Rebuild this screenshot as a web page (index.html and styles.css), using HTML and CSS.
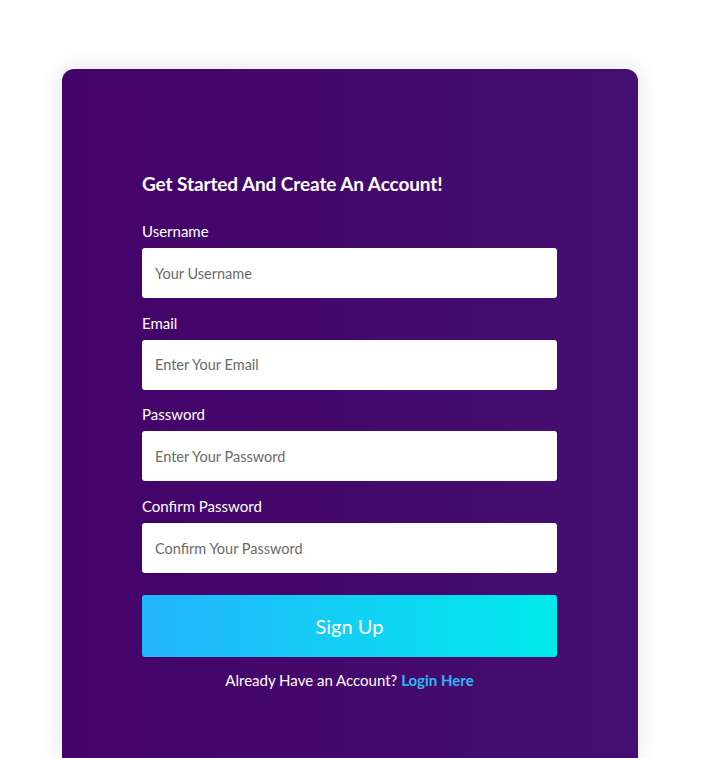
FILE: index.html
```html
<!DOCTYPE html>
<html lang="en">
<head>
<meta charset="utf-8">
<title>Sign Up</title>
<link rel="stylesheet" href="styles.css">
</head>
<body>
<div class="page">
  <div class="card">
    <form class="form">
      <h2 class="title">Get Started And Create An Account!</h2>
      <div class="field">
        <label class="label" for="u">Username</label>
        <input class="input" id="u" type="text" placeholder="Your Username">
      </div>
      <div class="field">
        <label class="label" for="e">Email</label>
        <input class="input" id="e" type="email" placeholder="Enter Your Email">
      </div>
      <div class="field">
        <label class="label" for="p">Password</label>
        <input class="input" id="p" type="password" placeholder="Enter Your Password">
      </div>
      <div class="field">
        <label class="label" for="c">Confirm Password</label>
        <input class="input" id="c" type="password" placeholder="Confirm Your Password">
      </div>
      <button class="btn" type="button">Sign Up</button>
      <p class="footer">Already Have an Account? <a class="link" href="#">Login Here</a></p>
    </form>
  </div>
</div>
</body>
</html>
```

FILE: styles.css
```css
* { box-sizing: border-box; }
html, body { margin: 0; padding: 0; background: #ffffff; overflow: hidden; }
body { font-family: Lato, "Open Sans", sans-serif; }
.page { padding: 69px 0 0 62px; height: 758px; }
.card {
  width: 576px;
  height: 689px;
  border-radius: 12px 12px 0 0;
  background: linear-gradient(90deg, #44036a 0%, #440f70 100%);
  box-shadow: 0 0 22px rgba(60, 70, 110, 0.16);
  padding: 102px 81px 0 80px;
}
.form { display: flex; flex-direction: column; width: 415px; }
.title {
  margin: 0 0 24px;
  color: #ffffff;
  font-size: 19px;
  line-height: 26px;
  font-weight: 700;
  letter-spacing: -0.1px;
}
.field { display: flex; flex-direction: column; margin-bottom: 14.7px; }
.label {
  color: #ffffff;
  font-size: 15px;
  line-height: 20px;
  margin-bottom: 7px;
}
.input {
  height: 50px;
  border: none;
  border-radius: 3px;
  background: #ffffff;
  padding: 0 13px;
  font-family: inherit;
  font-size: 14.5px;
  color: #333;
  outline: none;
}
.input::placeholder { color: #6a6a6a; }
.btn {
  margin-top: 7px;
  height: 62px;
  border: none;
  border-radius: 3px;
  background: linear-gradient(90deg, #24b4fd 0%, #00ebeb 100%);
  color: #ffffff;
  font-family: inherit;
  font-size: 20px;
}
.footer {
  margin: 13px 0 0;
  text-align: center;
  color: #ffffff;
  font-size: 15px;
  line-height: 20px;
}
.link { color: #2db8f5; font-weight: 700; text-decoration: none; }
```
